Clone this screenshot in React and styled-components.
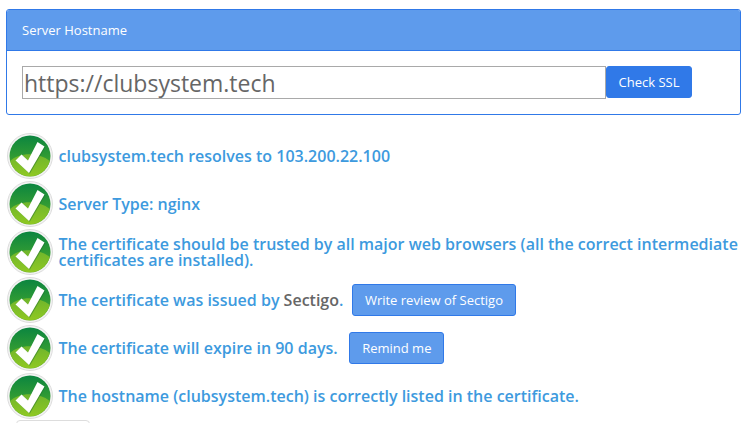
import React from 'react';
import styled, { createGlobalStyle } from 'styled-components';

const GlobalStyle = createGlobalStyle`
    html, body {
        margin: 0;
        height: 100%;
        overflow: hidden;
        background: #fff;
        font-family: "Open Sans", "Liberation Sans", sans-serif;
    }
`;

const Page = styled.div`
    padding: 9px 10px 0 6px;
`;

const Panel = styled.div`
    border: 1px solid #3079e8;
    border-radius: 3px;
    overflow: hidden;
`;

const PanelHeader = styled.div`
    height: 40px;
    line-height: 40px;
    padding-left: 15px;
    background: #5e9bec;
    border-bottom: 1px solid #3079e8;
    color: #fff;
    font-size: 13px;
`;

const PanelBody = styled.form`
    display: flex;
    align-items: flex-start;
    padding: 15px 15px 15px;
`;

const HostInput = styled.input`
    box-sizing: border-box;
    width: 584px;
    height: 33px;
    padding: 0 0 0 1px;
    border: 1px solid #a9a9a9;
    color: #666;
    font-family: inherit;
    font-size: 23px;
    outline: none;
`;

const Button = styled.button`
    box-sizing: border-box;
    height: 32px;
    padding: 0 ${(props) => (props.$solid ? '11.5px' : '12px')};
    border: 1px solid #3079e8;
    border-radius: 3px;
    background: ${(props) => (props.$solid ? '#3079e8' : '#5e9bec')};
    color: #fff;
    font-family: inherit;
    font-size: 13px;
    cursor: pointer;
`;

const Results = styled.div`
    margin-top: 17px;
`;

const Row = styled.div`
    display: flex;
    align-items: center;
    gap: 5.5px;
    height: 48px;
    padding-left: 1px;
`;

const RowText = styled.div`
    color: #3d9ade;
    font-size: 16px;
    font-weight: 600;
    line-height: 16px;
`;

const Issuer = styled.span`
    color: #666;
`;

const RowButton = styled(Button)`
    margin-left: ${(props) => props.$offset}px;
`;

const Inline = styled.div`
    display: flex;
    align-items: center;
    gap: 3px;
`;

const Clipped = styled.div`
    width: 72px;
    height: 30px;
    margin-left: 10px;
    border: 1px solid #ddd;
    border-radius: 4px;
`;

const Badge = styled.svg`
    flex-shrink: 0;
`;

const CHECK = 'M8.5 27.5 L14.5 21.5 L21 27.5 L30.5 9 L37.5 13.5 L22 40 Z';

function CheckIcon({ id }) {
    return (
        <Badge width="46" height="46" viewBox="0 0 46 46">
            <defs>
                <linearGradient id={`g${id}`} x1="0" y1="0" x2="0" y2="1">
                    <stop offset="0" stopColor="#0b8540" />
                    <stop offset="0.5" stopColor="#2f9a34" />
                    <stop offset="1" stopColor="#63ad2c" />
                </linearGradient>
                <linearGradient id={`s${id}`} x1="0" y1="0" x2="0" y2="1">
                    <stop offset="0" stopColor="#6fb52c" />
                    <stop offset="1" stopColor="#8fc823" />
                </linearGradient>
            </defs>
            <circle cx="23" cy="23" r="22.5" fill="#f4f4f4" stroke="#dcdcdc" />
            <circle cx="23" cy="23" r="20.5" fill={`url(#g${id})`} />
            <path d="M3.2 28 C12 19 32 19 42.8 28 A20.5 20.5 0 0 1 3.2 28 Z" fill={`url(#s${id})`} />
            <path d={CHECK} fill="#1a6b2e" opacity="0.45" transform="translate(0.8 0.8)" />
            <path d={CHECK} fill="#fff" />
        </Badge>
    );
}

function App() {
    return (
        <Page>
            <GlobalStyle />
            <Panel>
                <PanelHeader>Server Hostname</PanelHeader>
                <PanelBody onSubmit={(e) => e.preventDefault()}>
                    <HostInput defaultValue="https://clubsystem.tech" />
                    <Button $solid>Check SSL</Button>
                </PanelBody>
            </Panel>
            <Results>
                <Row>
                    <CheckIcon id={1} />
                    <RowText>clubsystem.tech resolves to 103.200.22.100</RowText>
                </Row>
                <Row>
                    <CheckIcon id={2} />
                    <RowText>Server Type: nginx</RowText>
                </Row>
                <Row>
                    <CheckIcon id={3} />
                    <RowText>The certificate should be trusted by all major web browsers (all the correct intermediate certificates are installed).</RowText>
                </Row>
                <Row>
                    <CheckIcon id={4} />
                    <Inline>
                        <RowText>The certificate was issued by <Issuer>Sectigo</Issuer>.</RowText>
                        <RowButton $offset={5.5}>Write review of Sectigo</RowButton>
                    </Inline>
                </Row>
                <Row>
                    <CheckIcon id={5} />
                    <Inline>
                        <RowText>The certificate will expire in 90 days.</RowText>
                        <RowButton $offset={8.5}>Remind me</RowButton>
                    </Inline>
                </Row>
                <Row>
                    <CheckIcon id={6} />
                    <RowText>The hostname (clubsystem.tech) is correctly listed in the certificate.</RowText>
                </Row>
                <Clipped />
            </Results>
        </Page>
    );
}

export default App;
